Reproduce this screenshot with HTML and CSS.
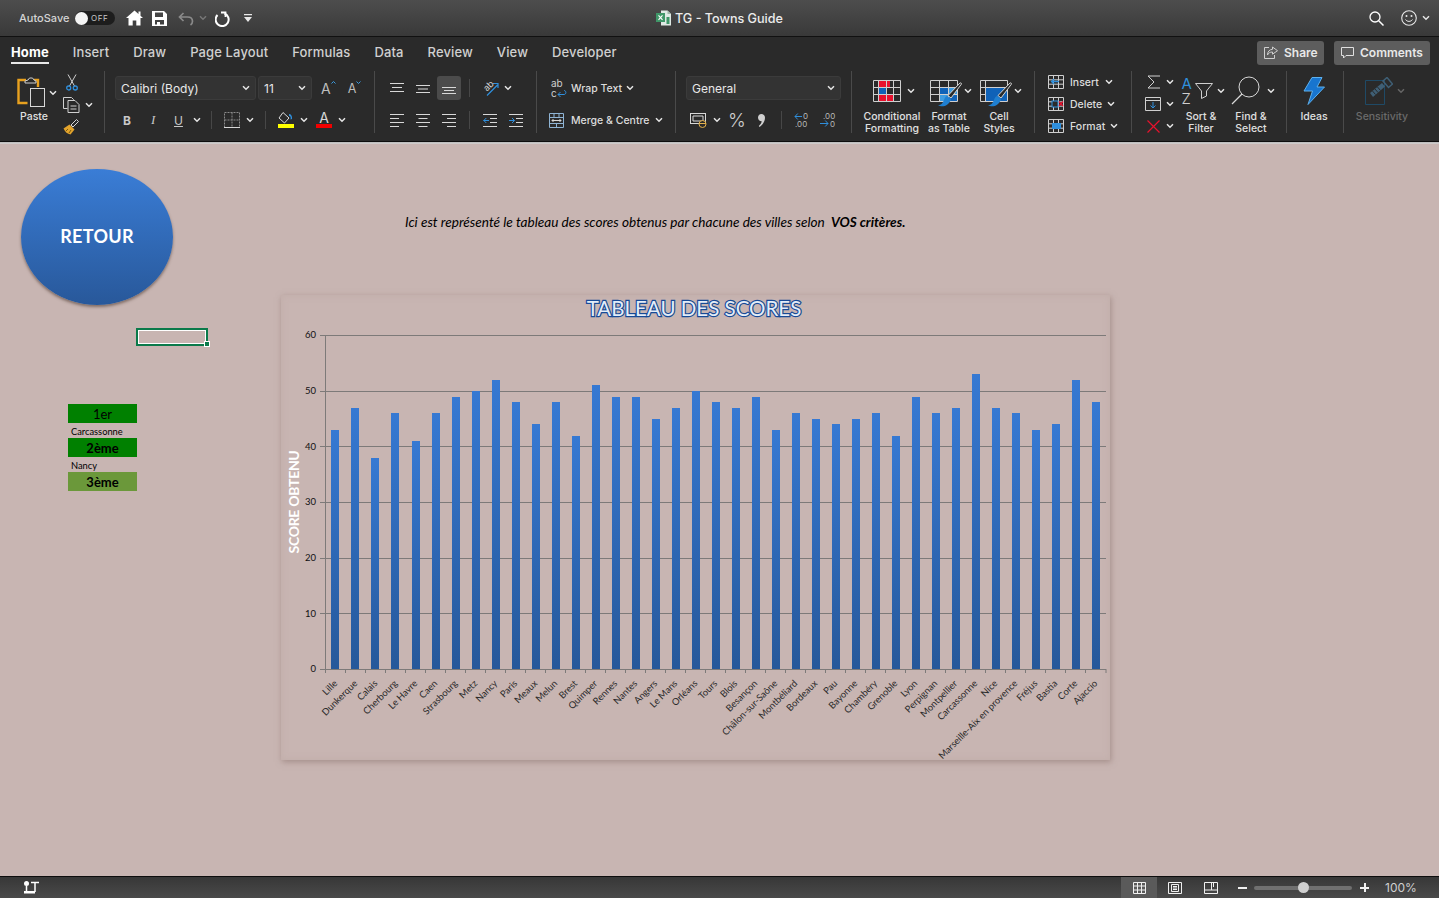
FILE: index.html
```html
<!DOCTYPE html>
<html lang="fr">
<head>
  <meta charset="UTF-8" />
  <title>TG - Towns Guide</title>
  <link rel="stylesheet" href="styles.css">
</head>
<body>
  <svg class="defs" aria-hidden="true">
    <symbol id="chev" viewBox="0 0 8 6"><path d="M1 1.200l3 3 3-3" fill="none" stroke="currentColor" stroke-width="1.500"/></symbol>
    <symbol id="grid" viewBox="0 0 16 14"><path d="M.5.500h15v13H.5zM.5 4.800h15M.5 9.200h15M5.500.5v13M10.500.5v13" fill="none" stroke="#cfcfcf"/></symbol>
    <symbol id="biggrid" viewBox="0 0 28 22"><path d="M.5.500h27v21H.5zM.5 7.500h27M.5 14.500h27M5.500.5v21M13.500.5v21M20.500.5v21" fill="none" stroke="#cfcfcf"/></symbol>
    <symbol id="brush" viewBox="0 0 24 26"><path d="M22 1c1-.5 1.800.3 1.300 1.300L13 16l-3-2.500z" fill="#2a2a2a" stroke="#d5d5d5"/><path d="M9.500 14C6 14.500 6.500 19 4 21.500 3 22.500 1.500 23 0 23c3.500 2.500 10 2 13-5.500z" fill="#1f7fd0"/></symbol>
  </svg>

  <!-- Barre de titre -->
  <header class="titlebar">
    <div class="tb-left">
      <span class="autosave">AutoSave</span>
      <span class="toggle"><span class="knob"></span><span class="off">OFF</span></span>
      <svg class="ml11" width="17" height="16" viewBox="0 0 17 16"><path d="M8.500.5L0 8h2.500v7.500h4.200v-5h3.600v5h4.200V8H17l-2.500-2.200V1.500h-2v2.500z" fill="#fff"/></svg>
      <svg class="ml9" width="15" height="15" viewBox="0 0 15 15"><path fill-rule="evenodd" d="M0 0h12l3 3v12H0zM3 1.500V6h8V1.500zM3 9v4.500h2V11h3v2.500h4V9z" fill="#fff"/></svg>
      <svg class="ml11" width="16" height="15" viewBox="0 0 16 15"><path d="M5.500 2L1.500 6l4 4M1.500 6h8c3 0 5 1.800 5 4.300 0 1.700-.8 2.900-2 3.700" fill="none" stroke="#8a8a8a" stroke-width="1.700"/></svg>
      <svg class="ml5 chev dim"><use href="#chev"/></svg>
      <svg class="ml8" width="16" height="17" viewBox="0 0 16 17"><path d="M9.500 3.500a6.500 6.500 0 1 1-7 1.500" fill="none" stroke="#fff" stroke-width="2"/><path d="M6 2.500h4.500V7" fill="none" stroke="#fff" stroke-width="1.800"/></svg>
      <svg class="ml13" width="8" height="9" viewBox="0 0 8 9"><path d="M0 0h8v1.300H0zM0 3h8L4 8z" fill="#e8e8e8"/></svg>
    </div>
    <div class="tb-title">
      <svg width="16" height="16" viewBox="0 0 16 16"><path d="M5 .5h6.500L15 4v11.500H5z" fill="#dfe9e4"/><path d="M11.500.5V4H15z" fill="#9db8aa"/><rect y="3" width="9" height="9" fill="#3f9668"/><path d="M2.500 5.300l4 4.500M6.500 5.300l-4 4.500" stroke="#fff" stroke-width="1.100"/><rect x="10.500" y="7" width="3" height="7" fill="#3f9668"/></svg>
      <span>TG - Towns Guide</span>
    </div>
    <div class="tb-right">
      <svg width="15" height="15" viewBox="0 0 15 15"><circle cx="6" cy="6" r="5" fill="none" stroke="#fff" stroke-width="1.300"/><path d="M9.700 9.700l4.800 4.800" stroke="#fff" stroke-width="1.500"/></svg>
      <svg class="ml17" width="16" height="16" viewBox="0 0 16 16"><circle cx="8" cy="8" r="7.300" fill="none" stroke="#e8e8e8" stroke-width="1.100"/><circle cx="5.500" cy="6" r="1" fill="#e8e8e8"/><circle cx="10.500" cy="6" r="1" fill="#e8e8e8"/><path d="M4.500 9.500c1.500 2.500 5.500 2.500 7 0" fill="none" stroke="#e8e8e8"/></svg>
      <svg class="ml5 chev light"><use href="#chev"/></svg>
    </div>
  </header>

  <!-- Onglets -->
  <nav class="tabs">
    <a class="tab current">Home</a>
    <a class="tab">Insert</a>
    <a class="tab">Draw</a>
    <a class="tab">Page Layout</a>
    <a class="tab">Formulas</a>
    <a class="tab">Data</a>
    <a class="tab">Review</a>
    <a class="tab">View</a>
    <a class="tab">Developer</a>
    <div class="tab-actions">
      <button class="pill share">
        <svg width="14" height="13" viewBox="0 0 14 13"><path d="M8.500 1l5 3.700-5 3.500V6C6 6 4.300 7 3.500 9 3.500 5.500 5.500 3.500 8.500 3.300zM5 1.500H.5v11h10V9" fill="none" stroke="#cfcfcf"/></svg>
        Share
      </button>
      <button class="pill comments">
        <svg width="13" height="12" viewBox="0 0 13 12"><path d="M.5.500h12v8H5L2.500 11V8.500h-2z" fill="none" stroke="#e0e0e0"/></svg>
        Comments
      </button>
    </div>
  </nav>

  <!-- Ruban -->
  <section class="ribbon">
    <div class="group g-clip">
      <div class="paste">
        <div class="paste-top">
          <svg width="28" height="31" viewBox="0 0 28 31"><path d="M9 3H1.500v23h9" fill="none" stroke="#e8a11f" stroke-width="2.400"/><path d="M17 3h4v7" fill="none" stroke="#e8a11f" stroke-width="2.400"/><path d="M8 4l3-1 1.500-2h3L17 3l2 1v2H8z" fill="#2a2a2a" stroke="#cfcfcf"/><rect x="13.500" y="11.500" width="14" height="18" fill="#2a2a2a" stroke="#d8d8d8"/></svg>
          <svg class="ml4 chev light"><use href="#chev"/></svg>
        </div>
        <span class="lbl">Paste</span>
      </div>
      <div class="clip-tools">
        <svg class="cut" width="12" height="17" viewBox="0 0 12 17"><path d="M2 .5l6.500 11.500M10 .5L3.500 12" stroke="#d0d0d0" fill="none"/><circle cx="2.700" cy="14" r="2" fill="none" stroke="#2f8fdc" stroke-width="1.300"/><circle cx="9.300" cy="14" r="2" fill="none" stroke="#2f8fdc" stroke-width="1.300"/></svg>
        <div class="row">
          <svg width="17" height="16" viewBox="0 0 17 16"><path d="M.5.500h8l2 2v1M.5.500v11h4" fill="none" stroke="#d0d0d0"/><path d="M5 3.500h7l4 4v8H5zM7.500 9h6M7.500 12h6" fill="none" stroke="#d0d0d0"/></svg>
          <svg class="ml5 chev light"><use href="#chev"/></svg>
        </div>
        <svg width="16" height="16" viewBox="0 0 16 16"><path d="M.5 9.500l6-4 5 5-4 5C4.500 15 2 13 .5 9.500z" fill="#e3a42c"/><path d="M8 6l5.500-5.500 2 2L10 8z" fill="none" stroke="#d8d8d8"/><path d="M3 12l2-2M6 14l2-3" stroke="#7a5a10"/></svg>
      </div>
    </div>

    <div class="group g-font">
      <div class="row">
        <div class="combo w141"><span>Calibri (Body)</span><svg class="chev light"><use href="#chev"/></svg></div>
        <div class="combo w54 ml2"><span>11</span><svg class="chev light"><use href="#chev"/></svg></div>
        <span class="grow ml9">A<svg width="5" height="4" viewBox="0 0 5 4"><path d="M.5 3.500l2-2 2 2" fill="none" stroke="#3b9be0"/></svg></span>
        <span class="shrink ml12">A<svg width="5" height="4" viewBox="0 0 5 4"><path d="M.5.500l2 2 2-2" fill="none" stroke="#3b9be0"/></svg></span>
      </div>
      <div class="row r2">
        <span class="fmt b ml8">B</span>
        <span class="fmt i ml20">I</span>
        <span class="fmt u ml15">U</span>
        <svg class="ml9 chev light"><use href="#chev"/></svg>
        <i class="vsep ml10"></i>
        <svg class="ml12" width="16" height="16" viewBox="0 0 16 16"><path d="M.5.500h15v15H.5z" fill="none" stroke="#8a8a8a" stroke-dasharray="2 1"/><path d="M8 .5v15M.5 8h15" stroke="#8a8a8a" stroke-dasharray="2 1"/><path d="M0 15.500h16" stroke="#d8d8d8"/></svg>
        <svg class="ml6 chev light"><use href="#chev"/></svg>
        <i class="vsep ml11"></i>
        <span class="swatch ml12"><svg width="16" height="12" viewBox="0 0 16 12"><path d="M5 .5l6 5.500-4.500 5L1 6z" fill="none" stroke="#d8d8d8"/><path d="M11 2c2 0 3.500 2 3 5l-1.500.5C13 5 12.500 4 11 4z" fill="#2f8fdc"/></svg><b class="yellow"></b></span>
        <svg class="ml6 chev light"><use href="#chev"/></svg>
        <span class="swatch ml8"><span class="a">A</span><b class="red"></b></span>
        <svg class="ml6 chev light"><use href="#chev"/></svg>
      </div>
    </div>

    <div class="group g-align">
      <div class="row">
        <svg class="ml15" width="14" height="11" viewBox="0 0 14 11"><path d="M0 .5h14M2 4.500h10M0 8.500h14" stroke="#d8d8d8"/></svg>
        <svg class="ml12" width="14" height="11" viewBox="0 0 14 11"><path d="M0 2.500h14M2 6h10M0 9.500h14" stroke="#d8d8d8"/></svg>
        <span class="selected ml7"><svg width="14" height="11" viewBox="0 0 14 11"><path d="M0 4.500h14M2 7.500h10M0 10.500h14" stroke="#d8d8d8"/></svg></span>
        <i class="vsep ml8"></i>
        <span class="orient ml12"><span class="ab">ab</span><svg width="17" height="16" viewBox="0 0 17 16"><path d="M5 15.500L15.500 5M11 3.500h5V8" fill="none" stroke="#2f8fdc" stroke-width="1.200"/></svg></span>
        <svg class="ml5 chev light"><use href="#chev"/></svg>
      </div>
      <div class="row r2">
        <svg class="ml15" width="14" height="13" viewBox="0 0 14 13"><path d="M0 .5h14M0 4.500h9M0 8.500h14M0 12.500h9" stroke="#d8d8d8"/></svg>
        <svg class="ml12" width="14" height="13" viewBox="0 0 14 13"><path d="M0 .5h14M2.500 4.500h9M0 8.500h14M2.500 12.500h9" stroke="#d8d8d8"/></svg>
        <svg class="ml12" width="14" height="13" viewBox="0 0 14 13"><path d="M0 .5h14M5 4.500h9M0 8.500h14M5 12.500h9" stroke="#d8d8d8"/></svg>
        <i class="vsep ml13"></i>
        <svg class="ml13" width="14" height="13" viewBox="0 0 14 13"><path d="M0 .5h14M7 4.500h7M7 8.500h7M0 12.500h14" stroke="#d8d8d8"/><path d="M6 6.500H.5M3.300 4L.8 6.500 3.300 9" fill="none" stroke="#2f8fdc"/></svg>
        <svg class="ml12" width="14" height="13" viewBox="0 0 14 13"><path d="M0 .5h14M7 4.500h7M7 8.500h7M0 12.500h14" stroke="#d8d8d8"/><path d="M0 6.500h5.500M3 4l2.500 2.500L3 9" fill="none" stroke="#2f8fdc"/></svg>
      </div>
    </div>

    <div class="group g-wrap">
      <div class="row">
        <span class="wrapicon ml14">ab<br>c<svg width="10" height="8" viewBox="0 0 10 8"><path d="M1 4.500h6c2.500 0 2.500-4 0-4M3.500 2L1 4.500 3.500 7" fill="none" stroke="#2f8fdc"/></svg></span>
        <span class="txt ml5">Wrap Text</span>
        <svg class="ml4 chev light"><use href="#chev"/></svg>
      </div>
      <div class="row r2">
        <svg class="ml12" width="15" height="15" viewBox="0 0 15 15"><path d="M.5.500h14v14H.5zM.5 4.500h14M.5 10.500h14M5 .5v4M10 .5v4M7.500 10.500v4" fill="none" stroke="#8fb4d4"/><path d="M3 7.500h9M4.500 6L3 7.500 4.500 9M10.500 6L12 7.500 10.500 9" fill="none" stroke="#d8d8d8"/></svg>
        <span class="txt ml7">Merge &amp; Centre</span>
        <svg class="ml5 chev light"><use href="#chev"/></svg>
      </div>
    </div>

    <div class="group g-num">
      <div class="row">
        <div class="combo w155"><span>General</span><svg class="chev light"><use href="#chev"/></svg></div>
      </div>
      <div class="row r2">
        <svg class="ml4" width="17" height="16" viewBox="0 0 17 16"><rect x=".5" y="1.500" width="15" height="10" fill="none" stroke="#d8d8d8"/><path d="M3 4h10v5H3z" fill="none" stroke="#d8d8d8"/><ellipse cx="12.500" cy="12" rx="3.500" ry="3.500" fill="#2a2a2a" stroke="#e3b04a"/><path d="M9 11.500h7" stroke="#e3b04a"/></svg>
        <svg class="ml6 chev light"><use href="#chev"/></svg>
        <span class="pct ml7">%</span>
        <svg class="ml14" width="7" height="13" viewBox="0 0 7 13"><path d="M3.300 0C5.300 0 7 1.500 7 3.800 7 7.500 4.500 11 1.500 13L.8 12C2.500 10.500 3.500 9 3.700 7.300 1.500 7.300 0 5.700 0 3.600 0 1.500 1.500 0 3.300 0z" fill="#cfcfcf"/></svg>
        <i class="vsep ml16"></i>
        <svg class="ml12" width="16" height="16" viewBox="0 0 16 16"><path d="M8 4.500H1M3.800 1.500L1 4.500l2.800 3" fill="none" stroke="#2f8fdc"/><text class="dec" x="9" y="7">0</text><text class="dec" x="1" y="15">.00</text></svg>
        <svg class="ml10" width="16" height="16" viewBox="0 0 16 16"><text class="dec" x="3" y="7">.00</text><path d="M0 11.500h8M5.200 8.500l2.800 3-2.800 3" fill="none" stroke="#2f8fdc"/><text class="dec" x="10" y="15">0</text></svg>
      </div>
    </div>

    <div class="group g-styles">
      <div class="bigbtn w70">
        <div class="big-top">
          <svg width="28" height="22" viewBox="0 0 28 22"><rect x="5" y="0" width="12" height="7" fill="#e8112d"/><rect x="5" y="7" width="8" height="7" fill="#0f62b8"/><rect x="5" y="14" width="15" height="7" fill="#e8112d"/><use href="#biggrid" width="28" height="22"/></svg>
          <svg class="ml6 chev light"><use href="#chev"/></svg>
        </div>
        <span class="lbl">Conditional<br>Formatting</span>
      </div>
      <div class="bigbtn w44">
        <div class="big-top">
          <span class="gridbrush"><svg width="28" height="22" viewBox="0 0 28 22"><rect x="9" y="7" width="9" height="7" fill="#0f62b8"/><rect x="18" y="7" width="9" height="7" fill="#3d9be0"/><rect x="9" y="14" width="9" height="7" fill="#3d9be0"/><rect x="18" y="14" width="9" height="7" fill="#0f62b8"/><path d="M.5.500h27v21H.5zM.5 7.500h27M.5 14.500h27M9.500.5v21M18.500.5v21" fill="none" stroke="#cfcfcf"/></svg><svg class="brush" width="24" height="26"><use href="#brush"/></svg></span>
          <svg class="ml6 chev light"><use href="#chev"/></svg>
        </div>
        <span class="lbl">Format<br>as Table</span>
      </div>
      <div class="bigbtn w56">
        <div class="big-top">
          <span class="gridbrush"><svg width="28" height="22" viewBox="0 0 28 22"><rect x="5" y="7" width="22" height="14" fill="#0f62b8"/><path d="M.5.500h27v21H.5zM.5 7.500h27M.5 14.500h5M5.500.5v21" fill="none" stroke="#cfcfcf"/></svg><svg class="brush" width="24" height="26"><use href="#brush"/></svg></span>
          <svg class="ml6 chev light"><use href="#chev"/></svg>
        </div>
        <span class="lbl">Cell<br>Styles</span>
      </div>
    </div>

    <div class="group g-cells">
      <div class="cell-row">
        <svg width="16" height="14" viewBox="0 0 16 14"><use href="#grid"/><path d="M11 6.500H3.500M6 4L3.500 6.500 6 9" fill="none" stroke="#2f8fdc" stroke-width="1.300"/></svg>
        <span class="txt ml6">Insert</span>
        <svg class="ml6 chev light"><use href="#chev"/></svg>
      </div>
      <div class="cell-row">
        <svg width="16" height="14" viewBox="0 0 16 14"><use href="#grid"/><rect x="4" y="4" width="6" height="6" fill="#2a2a2a" stroke="#2f8fdc"/><path d="M11 4.500l4 4.500M15 4.500L11 9" stroke="#e8112d" stroke-width="1.200"/></svg>
        <span class="txt ml6">Delete</span>
        <svg class="ml5 chev light"><use href="#chev"/></svg>
      </div>
      <div class="cell-row">
        <svg width="16" height="14" viewBox="0 0 16 14"><use href="#grid"/><rect x="4" y="4" width="9" height="6" fill="#2f8fdc"/></svg>
        <span class="txt ml6">Format</span>
        <svg class="ml5 chev light"><use href="#chev"/></svg>
      </div>
    </div>

    <div class="group g-edit">
      <div class="edit-col">
        <div class="cell-row">
          <svg class="ml2" width="13" height="14" viewBox="0 0 13 14"><path d="M13 1H1l6 6-6 6h12" fill="none" stroke="#cfcfcf"/></svg>
          <svg class="ml6 chev light"><use href="#chev"/></svg>
        </div>
        <div class="cell-row">
          <svg width="16" height="14" viewBox="0 0 16 14"><path d="M.5.500h15v13H.5zM.5 3.500h15" fill="none" stroke="#cfcfcf"/><path d="M8 5v6M5.500 8.500L8 11l2.500-2.500" fill="none" stroke="#2f8fdc"/></svg>
          <svg class="ml5 chev light"><use href="#chev"/></svg>
        </div>
        <div class="cell-row">
          <svg class="ml2" width="13" height="13" viewBox="0 0 13 13"><path d="M.5.500l12 12M12.500.5l-12 12" stroke="#e8112d" stroke-width="1.200"/></svg>
          <svg class="ml6 chev light"><use href="#chev"/></svg>
        </div>
      </div>
      <div class="bigbtn w50">
        <div class="big-top">
          <span class="azstack"><span class="az blue">A</span><span class="az">Z</span></span>
          <svg class="ml1" width="18" height="16" viewBox="0 0 18 16"><path d="M.5.500h17l-6 7.500v5l-5 2.500V8z" fill="none" stroke="#cfcfcf"/></svg>
          <svg class="ml4 chev light"><use href="#chev"/></svg>
        </div>
        <span class="lbl">Sort &amp;<br>Filter</span>
      </div>
      <div class="bigbtn w50">
        <div class="big-top">
          <svg width="30" height="29" viewBox="0 0 30 29"><circle cx="18" cy="11" r="10" fill="none" stroke="#d8d8d8"/><path d="M11 18L1 28" stroke="#d8d8d8" stroke-width="1.300"/></svg>
          <svg class="ml6 chev light"><use href="#chev"/></svg>
        </div>
        <span class="lbl">Find &amp;<br>Select</span>
      </div>
    </div>

    <div class="group g-ideas">
      <div class="bigbtn wfull">
        <div class="big-top">
          <svg width="22" height="28" viewBox="0 0 22 28"><path d="M9 .5h10l-5 9.500h7.500L5 27.500 9.500 14H1z" fill="#1875cf" stroke="#5db1ee"/></svg>
        </div>
        <span class="lbl">Ideas</span>
      </div>
    </div>

    <div class="group g-sens">
      <div class="bigbtn wfull muted">
        <div class="big-top">
          <svg width="28" height="28" viewBox="0 0 28 28"><path d="M.5 3.500h19v24H.5z" fill="none" stroke="#1f4a66"/><path d="M5 16L17 6l3 3.500L8 20z" fill="#3f5f75"/><path d="M7.500 14l3 3.500M10 12l3 3.500M12.500 10l3 3.500" stroke="#2a2a2a"/><path d="M18 4l4-3.500 5.500 6.500-4 3.500z" fill="none" stroke="#3f5f75" stroke-width="1.500"/></svg>
          <svg class="ml4 chev dark"><use href="#chev"/></svg>
        </div>
        <span class="lbl">Sensitivity</span>
      </div>
    </div>
  </section>
  <div class="ribbon-edge"></div>

  <!-- Feuille -->
  <main class="sheet">
    <div class="retour">RETOUR</div>
    <p class="intro">Ici est représenté le tableau des scores obtenus par chacune des villes selon <b>VOS critères.</b></p>
    <div class="selected-cell"><i class="handle"></i></div>

    <div class="podium">
      <div class="place green">1er</div>
      <div class="city">Carcassonne</div>
      <div class="place green strong">2ème</div>
      <div class="city">Nancy</div>
      <div class="place olive strong">3ème</div>
    </div>

    <div class="chart">
      <svg width="829" height="465" viewBox="281 295 829 465">
        <defs>
          <linearGradient id="bar" x1="0" y1="0" x2="0" y2="1">
            <stop offset="0" stop-color="#3679d3"/>
            <stop offset="1" stop-color="#26589a"/>
          </linearGradient>
        </defs>
        <text class="chart-title" x="694" y="316">TABLEAU DES SCORES</text>
        <text class="axis-title" transform="rotate(-90 299 502)" x="299" y="502">SCORE OBTENU</text>

        <g class="gridlines">
          <path d="M320 335.500H1106M320 391.500H1106M320 446.500H1106M320 502.500H1106M320 558.500H1106M320 613.500H1106M320 669.500H1106M325.500 335V669"/>
          <path d="M345.500 669v4M365.500 669v4M385.500 669v4M405.500 669v4M425.500 669v4M445.500 669v4M465.500 669v4M485.500 669v4M505.500 669v4M525.500 669v4M545.500 669v4M565.500 669v4M585.500 669v4M605.500 669v4M625.500 669v4M645.500 669v4M665.500 669v4M685.500 669v4M705.500 669v4M725.500 669v4M745.500 669v4M765.500 669v4M785.500 669v4M805.500 669v4M825.500 669v4M845.500 669v4M865.500 669v4M885.500 669v4M905.500 669v4M925.500 669v4M945.500 669v4M965.500 669v4M985.500 669v4M1005.500 669v4M1025.500 669v4M1045.500 669v4M1065.500 669v4M1085.500 669v4M1106 669v4M325.500 669v4"/>
        </g>

        <g class="y-labels">
          <text x="316" y="338">60</text>
          <text x="316" y="394">50</text>
          <text x="316" y="450">40</text>
          <text x="316" y="505">30</text>
          <text x="316" y="561">20</text>
          <text x="316" y="617">10</text>
          <text x="316" y="672">0</text>
        </g>

        <g fill="url(#bar)">
          <rect x="331" y="430" width="8" height="239"/>
          <rect x="351" y="408" width="8" height="261"/>
          <rect x="371" y="458" width="8" height="211"/>
          <rect x="391" y="413" width="8" height="256"/>
          <rect x="412" y="441" width="8" height="228"/>
          <rect x="432" y="413" width="8" height="256"/>
          <rect x="452" y="397" width="8" height="272"/>
          <rect x="472" y="391" width="8" height="278"/>
          <rect x="492" y="380" width="8" height="289"/>
          <rect x="512" y="402" width="8" height="267"/>
          <rect x="532" y="424" width="8" height="245"/>
          <rect x="552" y="402" width="8" height="267"/>
          <rect x="572" y="436" width="8" height="233"/>
          <rect x="592" y="385" width="8" height="284"/>
          <rect x="612" y="397" width="8" height="272"/>
          <rect x="632" y="397" width="8" height="272"/>
          <rect x="652" y="419" width="8" height="250"/>
          <rect x="672" y="408" width="8" height="261"/>
          <rect x="692" y="391" width="8" height="278"/>
          <rect x="712" y="402" width="8" height="267"/>
          <rect x="732" y="408" width="8" height="261"/>
          <rect x="752" y="397" width="8" height="272"/>
          <rect x="772" y="430" width="8" height="239"/>
          <rect x="792" y="413" width="8" height="256"/>
          <rect x="812" y="419" width="8" height="250"/>
          <rect x="832" y="424" width="8" height="245"/>
          <rect x="852" y="419" width="8" height="250"/>
          <rect x="872" y="413" width="8" height="256"/>
          <rect x="892" y="436" width="8" height="233"/>
          <rect x="912" y="397" width="8" height="272"/>
          <rect x="932" y="413" width="8" height="256"/>
          <rect x="952" y="408" width="8" height="261"/>
          <rect x="972" y="374" width="8" height="295"/>
          <rect x="992" y="408" width="8" height="261"/>
          <rect x="1012" y="413" width="8" height="256"/>
          <rect x="1032" y="430" width="8" height="239"/>
          <rect x="1052" y="424" width="8" height="245"/>
          <rect x="1072" y="380" width="8" height="289"/>
          <rect x="1092" y="402" width="8" height="267"/>
        </g>

        <g class="x-labels">
          <text transform="rotate(-45 338 684)" x="338" y="684">Lille</text>
          <text transform="rotate(-45 358 684)" x="358" y="684">Dunkerque</text>
          <text transform="rotate(-45 378 684)" x="378" y="684">Calais</text>
          <text transform="rotate(-45 398 684)" x="398" y="684">Cherbourg</text>
          <text transform="rotate(-45 418 684)" x="418" y="684">Le Havre</text>
          <text transform="rotate(-45 438 684)" x="438" y="684">Caen</text>
          <text transform="rotate(-45 458 684)" x="458" y="684">Strasbourg</text>
          <text transform="rotate(-45 478 684)" x="478" y="684">Metz</text>
          <text transform="rotate(-45 498 684)" x="498" y="684">Nancy</text>
          <text transform="rotate(-45 518 684)" x="518" y="684">Paris</text>
          <text transform="rotate(-45 538 684)" x="538" y="684">Meaux</text>
          <text transform="rotate(-45 558 684)" x="558" y="684">Melun</text>
          <text transform="rotate(-45 578 684)" x="578" y="684">Brest</text>
          <text transform="rotate(-45 598 684)" x="598" y="684">Quimper</text>
          <text transform="rotate(-45 618 684)" x="618" y="684">Rennes</text>
          <text transform="rotate(-45 638 684)" x="638" y="684">Nantes</text>
          <text transform="rotate(-45 658 684)" x="658" y="684">Angers</text>
          <text transform="rotate(-45 678 684)" x="678" y="684">Le Mans</text>
          <text transform="rotate(-45 698 684)" x="698" y="684">Orléans</text>
          <text transform="rotate(-45 718 684)" x="718" y="684">Tours</text>
          <text transform="rotate(-45 738 684)" x="738" y="684">Blois</text>
          <text transform="rotate(-45 758 684)" x="758" y="684">Besançon</text>
          <text transform="rotate(-45 778 684)" x="778" y="684">Châlon-sur-Saône</text>
          <text transform="rotate(-45 798 684)" x="798" y="684">Montbéliard</text>
          <text transform="rotate(-45 818 684)" x="818" y="684">Bordeaux</text>
          <text transform="rotate(-45 838 684)" x="838" y="684">Pau</text>
          <text transform="rotate(-45 858 684)" x="858" y="684">Bayonne</text>
          <text transform="rotate(-45 878 684)" x="878" y="684">Chambéry</text>
          <text transform="rotate(-45 898 684)" x="898" y="684">Grenoble</text>
          <text transform="rotate(-45 918 684)" x="918" y="684">Lyon</text>
          <text transform="rotate(-45 938 684)" x="938" y="684">Perpignan</text>
          <text transform="rotate(-45 958 684)" x="958" y="684">Montpellier</text>
          <text transform="rotate(-45 978 684)" x="978" y="684">Carcassonne</text>
          <text transform="rotate(-45 998 684)" x="998" y="684">Nice</text>
          <text transform="rotate(-45 1018 684)" x="1018" y="684">Marseille-Aix en provence</text>
          <text transform="rotate(-45 1038 684)" x="1038" y="684">Fréjus</text>
          <text transform="rotate(-45 1058 684)" x="1058" y="684">Bastia</text>
          <text transform="rotate(-45 1078 684)" x="1078" y="684">Corte</text>
          <text transform="rotate(-45 1098 684)" x="1098" y="684">Ajaccio</text>
        </g>
      </svg>
    </div>
  </main>

  <!-- Barre d'état -->
  <footer class="statusbar">
    <svg class="macro" width="15" height="13" viewBox="0 0 15 13"><circle cx="2.500" cy="2.500" r="2.500" fill="#fff"/><path d="M2.500 5v5M7 1.500h8M11 1.500V11" fill="none" stroke="#fff" stroke-width="1.500"/><rect y="10" width="11" height="2.500" fill="#fff"/></svg>
    <div class="views">
      <span class="view on"><svg width="13" height="12" viewBox="0 0 13 12"><path d="M.5.500h12v11H.5zM.5 4h12M.5 8h12M4.500.5v11M8.500.5v11" fill="none" stroke="#f0f0f0"/></svg></span>
      <span class="view"><svg width="14" height="12" viewBox="0 0 14 12"><path d="M.5.500h13v11H.5z" fill="none" stroke="#f0f0f0"/><path d="M3.500 2.500h7v7h-7zM5 4.500h4M5 6h4M5 7.500h4" fill="none" stroke="#f0f0f0"/></svg></span>
      <span class="view"><svg width="14" height="12" viewBox="0 0 14 12"><path d="M.5.500h13v11H.5zM.5 8h13M7.500.5V8M9.500.5V5" fill="none" stroke="#f0f0f0"/></svg></span>
    </div>
    <span class="zoom-btn minus"></span>
    <div class="slider"><span class="thumb"></span></div>
    <span class="zoom-btn plus"></span>
    <span class="zoom-val">100%</span>
  </footer>
</body>
</html>
```
FILE: styles.css
```css
* {
  box-sizing: border-box;
}
html, body {
  margin: 0;
  height: 898px;
  overflow: hidden;
}
body {
  display: flex;
  flex-direction: column;
  font-family: "Inter", "Liberation Sans", sans-serif;
  background-color: #c8b5b2;
  color: #e6e6e6;
}
svg {
  display: block;
  flex: none;
}
.defs {
  position: absolute;
  width: 0;
  height: 0;
}
.chev {
  width: 8px;
  height: 6px;
}
.chev.light { color: #e6e6e6; }
.chev.dim { color: #777; }
.chev.dark { color: #666; }

/* marges utilitaires */
.ml1 { margin-left: 1px; }
.ml2 { margin-left: 2px; }
.ml4 { margin-left: 4px; }
.ml5 { margin-left: 5px; }
.ml6 { margin-left: 6px; }
.ml7 { margin-left: 7px; }
.ml8 { margin-left: 8px; }
.ml9 { margin-left: 9px; }
.ml10 { margin-left: 10px; }
.ml11 { margin-left: 11px; }
.ml12 { margin-left: 12px; }
.ml13 { margin-left: 13px; }
.ml14 { margin-left: 14px; }
.ml15 { margin-left: 15px; }
.ml16 { margin-left: 16px; }
.ml17 { margin-left: 17px; }
.ml20 { margin-left: 20px; }

/* barre de titre */
.titlebar {
  flex: none;
  height: 37px;
  display: grid;
  grid-template-columns: 1fr auto 1fr;
  align-items: center;
  background: linear-gradient(#4d4d4d, #393939);
  border-bottom: 1px solid #111;
}
.tb-left, .tb-right, .tb-title {
  display: flex;
  align-items: center;
}
.tb-left {
  padding-left: 19px;
}
.tb-right {
  justify-content: flex-end;
  padding-right: 9px;
}
.autosave {
  width: 51px;
  font-size: 11px;
  font-weight: 500;
  color: #d4d4d4;
  white-space: nowrap;
}
.toggle {
  display: flex;
  align-items: center;
  width: 40px;
  height: 14px;
  margin-left: 5px;
  border-radius: 7px;
  background-color: #1d1d1d;
}
.knob {
  width: 13px;
  height: 13px;
  border-radius: 50%;
  background-color: #f4f4f4;
}
.off {
  margin-left: 3px;
  font-size: 8px;
  letter-spacing: .6px;
  color: #c8c8c8;
}
.tb-title {
  gap: 3px;
  font-size: 12.600px;
  font-weight: 500;
  color: #ececec;
}

/* onglets */
.tabs {
  flex: none;
  height: 32px;
  display: flex;
  align-items: center;
  padding: 0 9px 2px 11px;
  background-color: #2a2a2a;
  font-size: 13px;
  font-weight: 500;
  letter-spacing: .12px;
}
.tab {
  position: relative;
  margin-right: 24px;
  color: #d0d0d0;
}
.tab.current {
  color: #fff;
  font-weight: 700;
}
.tab.current::after {
  content: "";
  position: absolute;
  left: 0;
  right: 0;
  bottom: -4px;
  height: 2px;
  background-color: #e8e8e8;
}
.tab-actions {
  display: flex;
  gap: 10px;
  margin-left: auto;
  margin-top: 2px;
}
.pill {
  display: flex;
  align-items: center;
  gap: 6px;
  height: 24px;
  padding: 0 7px 1px;
  border: none;
  border-radius: 3px;
  background-color: #5d5d5d;
  color: #e8e8e8;
  font: 600 12px "Inter", "Liberation Sans", sans-serif;
}
.share { width: 67px; }
.comments { width: 96px; }

/* ruban */
.ribbon {
  flex: none;
  height: 72px;
  display: flex;
  background-color: #2a2a2a;
  font-size: 10.500px;
  font-weight: 500;
}
.ribbon-edge {
  flex: none;
  height: 3px;
  background: linear-gradient(#0d0d0d 33%, #b9b9b9 33%, #d4d0cf);
}
.group {
  position: relative;
  height: 72px;
  padding-top: 7px;
  flex: none;
}
.group::after {
  content: "";
  position: absolute;
  right: 0;
  top: 2px;
  height: 62px;
  width: 1px;
  background-color: #4a4a4a;
}
.g-sens::after { display: none; }
.g-clip { width: 105px; padding-left: 17px; display: flex; }
.g-font { width: 270px; padding-left: 10px; }
.g-align { width: 162px; }
.g-wrap { width: 139px; }
.g-num { width: 176px; padding-left: 10px; }
.g-styles { width: 183px; padding-left: 5px; display: flex; }
.g-cells { width: 97px; padding-left: 13px; padding-top: 6px; display: flex; flex-direction: column; gap: 8px; }
.g-edit { width: 155px; padding-left: 13px; padding-top: 0; display: flex; }
.g-ideas { width: 57px; padding-right: 3px; }
.g-sens { width: 95px; padding-right: 19px; }

.row {
  display: flex;
  align-items: center;
  height: 24px;
}
.row.r2 {
  margin-top: 8px;
}
.lbl {
  display: block;
  line-height: 12px;
  text-align: center;
  white-space: nowrap;
  color: #e0e0e0;
}
.txt {
  white-space: nowrap;
  color: #dcdcdc;
}

/* presse-papiers */
.paste-top {
  display: flex;
  align-items: center;
  height: 33px;
}
.paste .lbl {
  width: 34px;
  margin-top: 2px;
}
.clip-tools {
  display: flex;
  flex-direction: column;
  gap: 6px;
  margin-left: 6px;
  margin-top: -2px;
}
.clip-tools .cut {
  margin-left: 3px;
}
.clip-tools .row {
  height: 16px;
}

/* police */
.combo {
  display: flex;
  align-items: center;
  justify-content: space-between;
  height: 24px;
  padding: 0 5px;
  border: 1px solid #3b3b3b;
  border-radius: 3px;
  background-color: #333;
  color: #e8e8e8;
  font-size: 12px;
  font-weight: 400;
}
.w141 { width: 141px; }
.w54 { width: 54px; }
.w155 { width: 155px; }
.grow, .shrink {
  display: flex;
  color: #bdbdbd;
  font-size: 14px;
  font-weight: 400;
}
.shrink { font-size: 12.500px; }
.fmt {
  width: 8px;
  font-size: 13px;
  color: #c8c8c8;
  font-family: "Liberation Serif", serif;
}
.fmt.b { font-family: "Inter", sans-serif; font-weight: 700; font-size: 12px; }
.fmt.i { font-style: italic; }
.fmt.u { width: 10px; text-decoration: underline; font-family: "Inter", sans-serif; font-size: 12px; font-weight: 400; }
.vsep {
  display: block;
  width: 1px;
  height: 18px;
  background-color: #474747;
}
.swatch {
  display: flex;
  flex-direction: column;
  width: 16px;
  height: 16px;
  justify-content: flex-end;
}
.swatch b {
  display: block;
  flex: none;
  height: 4px;
}
.swatch .a {
  font-size: 14px;
  line-height: 12px;
  font-weight: 400;
  text-align: center;
  color: #d8d8d8;
}
.yellow { background-color: #ffff00; }
.red { background-color: #f20000; }

/* alignement */
.selected {
  display: flex;
  align-items: center;
  justify-content: center;
  width: 24px;
  height: 24px;
  border-radius: 3px;
  background-color: #4b4b4b;
}
.orient {
  position: relative;
  display: block;
}
.ab {
  position: absolute;
  left: 1px;
  top: 1px;
  font-size: 9px;
  line-height: 9px;
  font-weight: 400;
  color: #d8d8d8;
  transform: rotate(-45deg);
}
.wrapicon {
  position: relative;
  width: 15px;
  font-size: 10px;
  line-height: 10px;
  font-weight: 400;
  color: #cfcfcf;
}
.wrapicon svg {
  position: absolute;
  right: -1px;
  bottom: 0;
}

/* nombre */
.pct {
  width: 16px;
  font-size: 19px;
  font-weight: 300;
  color: #d0d0d0;
}
.dec {
  font-size: 8px;
  font-weight: 400;
  fill: #b8b8b8;
}

/* grands boutons */
.bigbtn {
  display: flex;
  flex-direction: column;
  align-items: center;
  flex: none;
}
.w70 { width: 70px; }
.w44 { width: 44px; }
.w56 { width: 56px; }
.w50 { width: 50px; }
.wfull { width: 100%; }
.big-top {
  display: flex;
  align-items: center;
  height: 35px;
  padding: 0 0 6px 4px;
}
.g-ideas .big-top { padding-left: 0; }
.g-sens .big-top { padding-left: 6px; }
.g-edit .bigbtn { margin-top: 7px; }
.gridbrush {
  position: relative;
}
.brush {
  position: absolute;
  right: -4px;
  bottom: -6px;
}
.muted .lbl { color: #6b6b6b; }

/* cellules et édition */
.cell-row {
  display: flex;
  align-items: center;
  height: 14px;
}
.edit-col {
  display: flex;
  flex-direction: column;
  gap: 8px;
  padding-top: 6px;
  width: 31px;
}
.azstack {
  display: flex;
  flex-direction: column;
  width: 12px;
}
.az {
  font-size: 15px;
  line-height: 15px;
  font-weight: 300;
  color: #cfcfcf;
}
.az.blue { color: #2f8fdc; font-weight: 400; }

/* feuille */
.sheet {
  position: relative;
  flex: 1;
  min-height: 0;
  background-color: #c8b5b2;
}
.retour {
  position: absolute;
  left: 21px;
  top: 25px;
  width: 152px;
  height: 136px;
  padding-bottom: 2px;
  display: flex;
  align-items: center;
  justify-content: center;
  border-radius: 50%;
  background: linear-gradient(#3a7dd6, #28589a);
  box-shadow: 0 2px 3px rgba(70, 50, 40, .55);
  color: #fff;
  font: 700 18px "Lato", sans-serif;
  letter-spacing: .3px;
}
.intro {
  position: absolute;
  left: 405px;
  top: 70px;
  margin: 0;
  color: #000;
  font: italic 13.600px "Lato", "Liberation Sans", sans-serif;
  white-space: nowrap;
}
.intro b {
  margin-left: 3px;
}
.selected-cell {
  position: absolute;
  left: 136px;
  top: 184px;
  width: 72px;
  height: 18px;
  border: 2px solid #0a7a4a;
  box-shadow: inset 0 0 0 1px #fff;
}
.handle {
  position: absolute;
  right: -4px;
  bottom: -3px;
  background-color: #0a7a4a;
  border: 1px solid #fff;
  box-sizing: content-box;
  width: 4px;
  height: 4px;
}
.podium {
  position: absolute;
  left: 68px;
  top: 260px;
  width: 69px;
  color: #000;
  font-family: "Lato", sans-serif;
}
.place {
  height: 19px;
  line-height: 20px;
  text-align: center;
  font-size: 13px;
}
.place.strong { font-weight: 700; }
.green { background-color: #008000; }
.olive { background-color: #6b983a; }
.city {
  height: 15px;
  line-height: 17px;
  padding-left: 3px;
  font-size: 9.300px;
  white-space: nowrap;
}

/* graphique */
.chart {
  position: absolute;
  left: 281px;
  top: 151px;
  width: 829px;
  height: 465px;
  box-shadow: 1px 2px 6px rgba(140, 115, 110, .6), inset 0 0 6px rgba(185, 165, 160, .5);
}
.chart-title {
  text-anchor: middle;
  font: 400 20.500px "Lato", sans-serif;
  fill: #e4edf8;
  stroke: #174a96;
  stroke-width: 2.400px;
  paint-order: stroke;
}
.axis-title {
  text-anchor: middle;
  font: 700 14px "Lato", sans-serif;
  letter-spacing: -.3px;
  fill: #fff;
}
.gridlines path {
  stroke: #7d7a79;
  stroke-width: 1;
  fill: none;
}
.y-labels text {
  text-anchor: end;
  font: 9.500px "Lato", sans-serif;
  fill: #111;
}
.x-labels text {
  text-anchor: end;
  font: 9.400px "Lato", sans-serif;
  fill: #2b2b2b;
}

/* barre d'état */
.statusbar {
  flex: none;
  height: 22px;
  display: flex;
  align-items: center;
  padding-left: 24px;
  background: linear-gradient(#373737, #4a4a4a);
  border-top: 1px solid #0d0d0d;
}
.views {
  display: flex;
  align-self: stretch;
  margin-left: auto;
}
.view {
  display: flex;
  align-items: center;
  justify-content: center;
  width: 36px;
}
.view.on {
  background-color: #5a5a5a;
}
.zoom-btn {
  position: relative;
  width: 9px;
  height: 2px;
  margin-left: 9px;
  background-color: #f0f0f0;
}
.plus::after {
  content: "";
  position: absolute;
  left: 3.500px;
  top: -3.500px;
  width: 2px;
  height: 9px;
  background-color: #f0f0f0;
}
.slider {
  position: relative;
  width: 98px;
  height: 4px;
  margin-left: 7px;
  border-radius: 2px;
  background-color: #707070;
}
.thumb {
  position: absolute;
  left: 44px;
  top: -3.500px;
  width: 11px;
  height: 11px;
  border-radius: 50%;
  background-color: #d0d0d0;
}
.plus {
  margin-left: 8px;
}
.zoom-val {
  width: 54px;
  margin-left: 16px;
  font-size: 12px;
  color: #d0d0d0;
}
```
